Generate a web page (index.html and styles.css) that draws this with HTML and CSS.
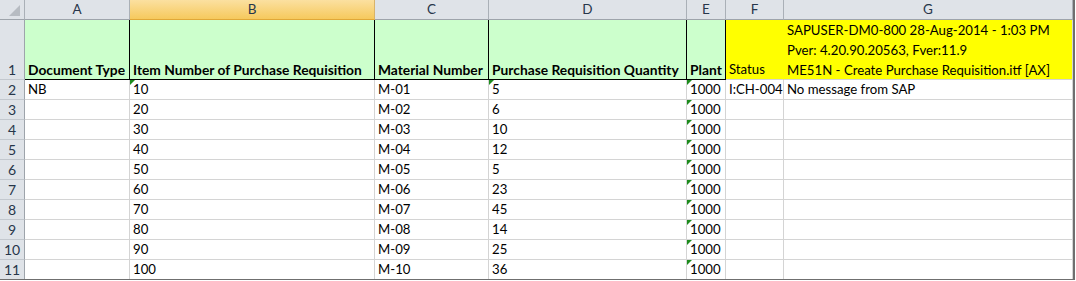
FILE: index.html
```html
<!DOCTYPE html>
<html>
<head>
<meta charset="utf-8">
<link rel="stylesheet" href="styles.css">
</head>
<body>
<div class="sheet">
  <div class="hd corner"><svg width="24" height="19" viewBox="0 0 24 19"><polygon points="20,5 20,16 9,16" fill="#b7bcc2"/></svg></div>
  <div class="hd col">A</div>
  <div class="hd col sel">B</div>
  <div class="hd col">C</div>
  <div class="hd col">D</div>
  <div class="hd col">E</div>
  <div class="hd col">F</div>
  <div class="hd col">G</div>

  <div class="hd rn">1</div>
  <div class="c h1 bold">Document Type</div>
  <div class="c h1 bold">Item Number of Purchase Requisition</div>
  <div class="c h1 bold">Material Number</div>
  <div class="c h1 bold">Purchase Requisition Quantity</div>
  <div class="c h1 bold">Plant</div>
  <div class="c y yf">Status</div>
  <div class="c y yg"><div class="lines"><span>SAPUSER-DM0-800 28-Aug-2014 - 1:03 PM</span><span>Pver: 4.20.90.20563, Fver:11.9</span><span>ME51N - Create Purchase Requisition.itf [AX]</span></div></div>

  <div class="hd rn">2</div>
  <div class="c">NB</div>
  <div class="c t">10</div>
  <div class="c">M-01</div>
  <div class="c t">5</div>
  <div class="c t">1000</div>
  <div class="c">I:CH-004</div>
  <div class="c">No message from SAP</div>

  <div class="hd rn">3</div>
  <div class="c"></div><div class="c">20</div><div class="c">M-02</div><div class="c">6</div><div class="c t">1000</div><div class="c"></div><div class="c"></div>

  <div class="hd rn">4</div>
  <div class="c"></div><div class="c">30</div><div class="c">M-03</div><div class="c">10</div><div class="c t">1000</div><div class="c"></div><div class="c"></div>

  <div class="hd rn">5</div>
  <div class="c"></div><div class="c">40</div><div class="c">M-04</div><div class="c">12</div><div class="c t">1000</div><div class="c"></div><div class="c"></div>

  <div class="hd rn">6</div>
  <div class="c"></div><div class="c">50</div><div class="c">M-05</div><div class="c">5</div><div class="c t">1000</div><div class="c"></div><div class="c"></div>

  <div class="hd rn">7</div>
  <div class="c"></div><div class="c">60</div><div class="c">M-06</div><div class="c">23</div><div class="c t">1000</div><div class="c"></div><div class="c"></div>

  <div class="hd rn">8</div>
  <div class="c"></div><div class="c">70</div><div class="c">M-07</div><div class="c">45</div><div class="c t">1000</div><div class="c"></div><div class="c"></div>

  <div class="hd rn">9</div>
  <div class="c"></div><div class="c">80</div><div class="c">M-08</div><div class="c">14</div><div class="c t">1000</div><div class="c"></div><div class="c"></div>

  <div class="hd rn">10</div>
  <div class="c"></div><div class="c">90</div><div class="c">M-09</div><div class="c">25</div><div class="c t">1000</div><div class="c"></div><div class="c"></div>

  <div class="hd rn last">11</div>
  <div class="c last"></div><div class="c last">100</div><div class="c last">M-10</div><div class="c last">36</div><div class="c t last">1000</div><div class="c last"></div><div class="c last"></div>
</div>
</body>
</html>
```

FILE: styles.css
```css
* { box-sizing: border-box; }
html, body { margin: 0; padding: 0; background: #ffffff; }
body {
  width: 1076px;
  height: 281px;
  overflow: hidden;
  font-family: Lato, "Open Sans", sans-serif;
  color: #000;
}
.sheet {
  display: grid;
  grid-template-columns: 25px 105px 245px 114px 198px 39px 58px 289px;
  grid-template-rows: 20px 60px repeat(9, 20px) 19px;
  width: 1075px;
  border-right: 2px solid #6f6f6f;
  border-bottom: 1px solid #6f6f6f;
}
.hd {
  background: #dfe3e8;
  color: #27364a;
  font-size: 13.5px;
  display: flex;
  align-items: center;
  justify-content: center;
  border-right: 1px solid #aab0b7;
  border-bottom: 1px solid #9ea4ab;
}
.corner { padding: 0; align-items: stretch; justify-content: stretch; }
.corner svg { display: block; }
.col { line-height: 19px; }
.col.sel {
  background: linear-gradient(#fbe0a0, #f6c95d);
  border-bottom-color: #e0a838;
  border-right-color: #d8b36a;
}
.rn {
  align-items: flex-end;
  line-height: 19px;
  border-bottom-color: #c3c8ce;
  border-right-color: #9ea4ab;
  font-size: 14px;
}
.rn.last { border-bottom: 0; }
.c {
  position: relative;
  display: flex;
  align-items: flex-end;
  padding-left: 3px;
  font-size: 13.2px;
  line-height: 19px;
  white-space: nowrap;
  overflow: hidden;
  border-right: 1px solid #d4d4d4;
  border-bottom: 1px solid #d4d4d4;
}
.c.last { border-bottom: 0; }
.h1 {
  background: #ccffcc;
  border-right-color: #000;
  border-bottom-color: #000;
}
.bold { font-weight: bold; font-size: 13.8px; }
.y { background: #ffff00; }
.yf { border-right-color: transparent; }
.yg { align-items: flex-start; }
.lines { display: flex; flex-direction: column; line-height: 20px; }
.t::before {
  content: "";
  position: absolute;
  left: 0;
  top: 0;
  border-top: 5px solid #1e8c1e;
  border-right: 5px solid transparent;
}
```
